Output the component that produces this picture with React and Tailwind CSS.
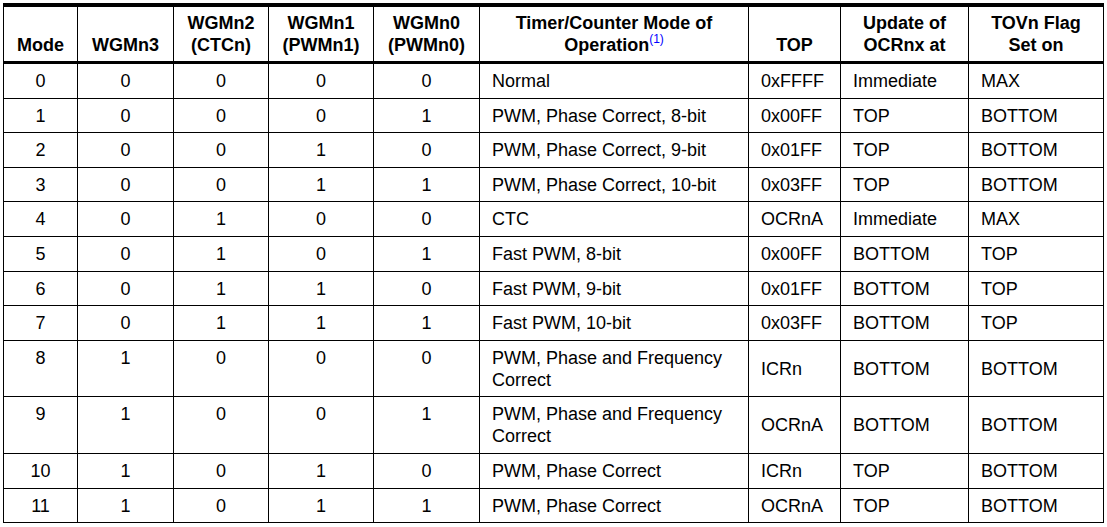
import React from "react";

const rows = [
  ["0", "0", "0", "0", "0", "Normal", "0xFFFF", "Immediate", "MAX"],
  ["1", "0", "0", "0", "1", "PWM, Phase Correct, 8-bit", "0x00FF", "TOP", "BOTTOM"],
  ["2", "0", "0", "1", "0", "PWM, Phase Correct, 9-bit", "0x01FF", "TOP", "BOTTOM"],
  ["3", "0", "0", "1", "1", "PWM, Phase Correct, 10-bit", "0x03FF", "TOP", "BOTTOM"],
  ["4", "0", "1", "0", "0", "CTC", "OCRnA", "Immediate", "MAX"],
  ["5", "0", "1", "0", "1", "Fast PWM, 8-bit", "0x00FF", "BOTTOM", "TOP"],
  ["6", "0", "1", "1", "0", "Fast PWM, 9-bit", "0x01FF", "BOTTOM", "TOP"],
  ["7", "0", "1", "1", "1", "Fast PWM, 10-bit", "0x03FF", "BOTTOM", "TOP"],
  ["8", "1", "0", "0", "0", "PWM, Phase and Frequency Correct", "ICRn", "BOTTOM", "BOTTOM"],
  ["9", "1", "0", "0", "1", "PWM, Phase and Frequency Correct", "OCRnA", "BOTTOM", "BOTTOM"],
  ["10", "1", "0", "1", "0", "PWM, Phase Correct", "ICRn", "TOP", "BOTTOM"],
  ["11", "1", "0", "1", "1", "PWM, Phase Correct", "OCRnA", "TOP", "BOTTOM"],
];

const th = "border border-black border-b-[3px] border-t-[4px] align-bottom text-center font-bold pt-[5px] pb-[5px] px-[2px]";
const tdC = "border border-black align-top text-center pt-[6px] pb-[5.6px] px-[2px]";
const tdL = "border border-black align-top text-left pt-[6px] pb-[5.6px] pl-[12px] pr-[4px]";
const tdM = "border border-black align-middle text-left pt-[6px] pb-[5.6px] pl-[12px] pr-[4px]";

export default function App() {
  return (
    <div
      className="w-[1107px] h-[527px] bg-white pt-[3px] pl-[3px] text-black"
      style={{ fontFamily: '"Liberation Sans", Arial, sans-serif' }}
    >
      <table className="table-fixed border-collapse w-[1100px] text-[18px] leading-[22px]">
        <colgroup>
          <col className="w-[74px]" />
          <col className="w-[96px]" />
          <col className="w-[95px]" />
          <col className="w-[105px]" />
          <col className="w-[106px]" />
          <col className="w-[269px]" />
          <col className="w-[92px]" />
          <col className="w-[128px]" />
          <col className="w-[135px]" />
        </colgroup>
        <thead>
          <tr>
            <th className={th}>Mode</th>
            <th className={th}>WGMn3</th>
            <th className={th}>
              WGMn2
              <br />
              (CTCn)
            </th>
            <th className={th}>
              WGMn1
              <br />
              (PWMn1)
            </th>
            <th className={th}>
              WGMn0
              <br />
              (PWMn0)
            </th>
            <th className={th}>
              Timer/Counter Mode of
              <br />
              Operation
              <sup className="text-[12px] font-normal text-[#0000ff] relative top-[-1px] align-super leading-none">(1)</sup>
            </th>
            <th className={th}>TOP</th>
            <th className={th}>
              Update of
              <br />
              OCRnx at
            </th>
            <th className={th}>
              TOVn Flag
              <br />
              Set on
            </th>
          </tr>
        </thead>
        <tbody>
          {rows.map((r) => (
            <tr key={r[0]}>
              <td className={tdC}>{r[0]}</td>
              <td className={tdC}>{r[1]}</td>
              <td className={tdC}>{r[2]}</td>
              <td className={tdC}>{r[3]}</td>
              <td className={tdC}>{r[4]}</td>
              <td className={tdL}>{r[5]}</td>
              <td className={tdM}>{r[6]}</td>
              <td className={tdM}>{r[7]}</td>
              <td className={tdM}>{r[8]}</td>
            </tr>
          ))}
        </tbody>
      </table>
    </div>
  );
}
